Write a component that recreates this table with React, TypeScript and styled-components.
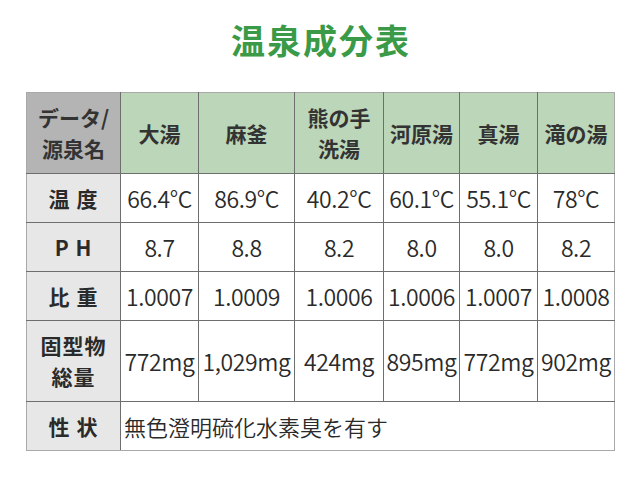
import React from 'react';
import styled, { createGlobalStyle } from 'styled-components';

const FONT = '"Noto Sans CJK JP", "Noto Sans", sans-serif';

const springs = ['大湯', '麻釜', '熊の手\n洗湯', '河原湯', '真湯', '滝の湯'];

const rows: { label: string; values: string[]; tall?: boolean }[] = [
  { label: '温 度', values: ['66.4°C', '86.9°C', '40.2°C', '60.1°C', '55.1°C', '78°C'] },
  { label: 'P H', values: ['8.7', '8.8', '8.2', '8.0', '8.0', '8.2'] },
  { label: '比 重', values: ['1.0007', '1.0009', '1.0006', '1.0006', '1.0007', '1.0008'] },
  {
    label: '固型物\n総量',
    values: ['772mg', '1,029mg', '424mg', '895mg', '772mg', '902mg'],
    tall: true,
  },
];

const colWidths = [94, 78, 96, 89, 76, 78, 77];

const App = () => (
  <>
    <GlobalStyle />
    <Page>
      <Title>温泉成分表</Title>
      <Table>
        <colgroup>
          {colWidths.map((w, i) => (
            <col key={i} style={{ width: w }} />
          ))}
        </colgroup>
        <thead>
          <tr>
            <Corner>{'データ/\n源泉名'}</Corner>
            {springs.map((name) => (
              <HeadCell key={name}>{name}</HeadCell>
            ))}
          </tr>
        </thead>
        <tbody>
          {rows.map((row) => (
            <Row key={row.label} $tall={row.tall}>
              <Label>{row.label}</Label>
              {row.values.map((v, i) => (
                <Cell key={i}>{v}</Cell>
              ))}
            </Row>
          ))}
          <Row>
            <Label>性 状</Label>
            <Note colSpan={6}>無色澄明硫化水素臭を有す</Note>
          </Row>
        </tbody>
      </Table>
    </Page>
  </>
);

const GlobalStyle = createGlobalStyle`
  html, body {
    margin: 0;
    background: #fff;
    font-family: ${FONT};
  }
`;

const Page = styled.div`
  display: flex;
  flex-direction: column;
  align-items: center;
  width: 640px;
  padding-top: 19px;
`;

const Title = styled.h1`
  margin: 0 0 0 2px;
  height: 73px;
  font-size: 34px;
  line-height: 42px;
  font-weight: 700;
  color: #3b9a47;
  letter-spacing: 2px;
`;

const Table = styled.table`
  width: 588px;
  margin-left: 1px;
  table-layout: fixed;
  border-collapse: collapse;
  border: 1px solid #a9a9a9;
  color: #2a2a2a;
  font-family: ${FONT};

  td,
  th {
    border: 1px solid #6e6e6e;
    padding: 0;
    text-align: center;
    white-space: pre-line;
  }
  tr > :first-child {
    border-left-color: #a9a9a9;
  }
  tr > :last-child {
    border-right-color: #a9a9a9;
  }
  thead th {
    border-top-color: #a9a9a9;
  }
  tbody tr:last-child td {
    border-bottom-color: #a9a9a9;
  }
`;

const HeadCell = styled.th`
  height: 80px;
  background: #bbd6b9;
  font-size: 21px;
  line-height: 31px;
  font-weight: 700;
  color: #333;
`;

const Corner = styled(HeadCell)`
  background: #b4b4b4;
`;

const Row = styled.tr<{ $tall?: boolean }>`
  height: ${(p) => (p.$tall ? 81 : 49)}px;
`;

const Label = styled.td`
  background: #e7e7e7;
  font-size: 21px;
  line-height: 31px;
  font-weight: 700;
  letter-spacing: 1px;
`;

const Cell = styled.td`
  font-size: 23px;
  font-weight: 350;
  letter-spacing: -0.4px;
`;

const Note = styled(Cell)`
  text-align: left !important;
  padding-left: 3px !important;
  font-size: 22px;
  letter-spacing: 0;
`;

export default App;
